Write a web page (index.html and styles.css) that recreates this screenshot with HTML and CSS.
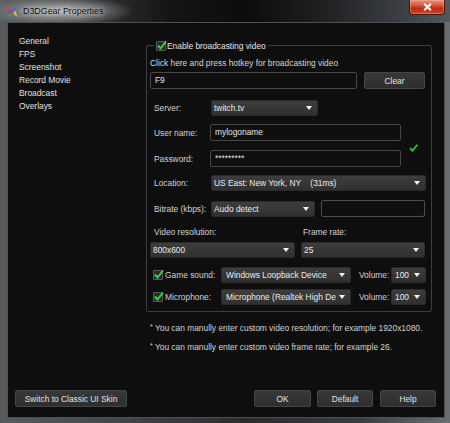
FILE: index.html
```html
<!DOCTYPE html>
<html>
<head>
<meta charset="utf-8">
<title>D3DGear Properties</title>
<link rel="stylesheet" href="styles.css">
</head>
<body>
<div class="window">
  <div class="titlebar">
    <svg class="app-icon" width="12" height="12" viewBox="0 0 12 12">
      <polygon points="0.5,1 6,5 3,7.5" fill="#e8342a"/>
      <polygon points="11.5,0.5 7,6.5 5,3.5" fill="#2f6ff0"/>
      <polygon points="1,11.5 4.5,6 7,9" fill="#22b04a"/>
      <polygon points="11.5,11 6,7 9,4.5" fill="#f0c020"/>
      <polygon points="4,4.5 7.5,4 8,7.5 4.5,8" fill="#9a3ad8"/>
    </svg>
    <span class="title">D3DGear Properties</span>
    <div class="close">
      <svg width="9" height="8" viewBox="0 0 9 8"><path d="M1.2 0.8 L7.8 7.2 M7.8 0.8 L1.2 7.2" stroke="#fff" stroke-width="2.1"/></svg>
    </div>
  </div>

  <div class="client">
    <div class="main">
      <ul class="nav">
        <li>General</li>
        <li>FPS</li>
        <li>Screenshot</li>
        <li>Record Movie</li>
        <li>Broadcast</li>
        <li>Overlays</li>
      </ul>

      <div class="panel">
        <fieldset class="group">
          <legend class="legend">
            <span class="checkbox"><svg width="11" height="11" viewBox="0 0 11 11"><path d="M2 5.5 L4.5 8.5 L10 1.5" fill="none" stroke="#39d13a" stroke-width="2"/></svg></span>
            <span>Enable broadcasting video</span>
          </legend>

          <div class="hint">Click here and press hotkey for broadcasting video</div>

          <div class="row hotkey-row">
            <div class="input hotkey">F9</div>
            <div class="btn clear">Clear</div>
          </div>

          <div class="row server-row">
            <span class="label">Server:</span>
            <div class="select server"><span class="val">twitch.tv</span><span class="arrow"></span></div>
          </div>

          <div class="creds">
            <span class="label">User name:</span>
            <div class="input">mylogoname</div>
            <svg class="ok-mark" width="9" height="8" viewBox="0 0 9 8"><path d="M1 4.2 L3.4 6.8 L8.3 0.8" fill="none" stroke="#2ec82e" stroke-width="1.8"/></svg>
            <span class="label">Password:</span>
            <div class="input pw">*********</div>
          </div>

          <div class="row location-row">
            <span class="label">Location:</span>
            <div class="select location"><span class="val">US East: New York, NY&nbsp;&nbsp;&nbsp;&nbsp;(31ms)</span><span class="arrow"></span></div>
          </div>

          <div class="row bitrate-row">
            <span class="label">Bitrate (kbps):</span>
            <div class="select bitrate"><span class="val">Audo detect</span><span class="arrow"></span></div>
            <div class="input bitrate-input"></div>
          </div>

          <div class="video-grid">
            <span class="caption res-cap">Video resolution:</span>
            <span class="caption fr-cap">Frame rate:</span>
            <div class="select"><span class="val">800x600</span><span class="arrow"></span></div>
            <div class="select"><span class="val">25</span><span class="arrow"></span></div>
          </div>

          <div class="row audio-row game-row">
            <span class="checkbox small"><svg width="11" height="11" viewBox="0 0 11 11"><path d="M2 5.5 L4.5 8.5 L10 1.5" fill="none" stroke="#39d13a" stroke-width="2"/></svg></span>
            <span class="audio-label">Game sound:</span>
            <div class="select device"><span class="val">Windows Loopback Device</span><span class="arrow"></span></div>
            <span class="vol-label">Volume:</span>
            <div class="select volume"><span class="val">100</span><span class="arrow"></span></div>
          </div>

          <div class="row audio-row mic-row">
            <span class="checkbox small"><svg width="11" height="11" viewBox="0 0 11 11"><path d="M2 5.5 L4.5 8.5 L10 1.5" fill="none" stroke="#39d13a" stroke-width="2"/></svg></span>
            <span class="audio-label">Microphone:</span>
            <div class="select device"><span class="val">Microphone (Realtek High Defir</span><span class="arrow"></span></div>
            <span class="vol-label">Volume:</span>
            <div class="select volume"><span class="val">100</span><span class="arrow"></span></div>
          </div>
        </fieldset>

        <div class="notes">
          <p><span class="star">*</span> You can manully enter custom video resolution; for example 1920x1080.</p>
          <p><span class="star">*</span> You can manully enter custom video frame rate; for example 26.</p>
        </div>
      </div>
    </div>

    <div class="footer">
      <div class="btn skin">Switch to Classic UI Skin</div>
      <div class="spacer"></div>
      <div class="btn ok">OK</div>
      <div class="btn default">Default</div>
      <div class="btn help">Help</div>
    </div>
  </div>
</div>
</body>
</html>
```

FILE: styles.css
```css
html, body {
  margin: 0;
  padding: 0;
  background: #1a1c1e;
}

.window {
  width: 450px;
  height: 423px;
  box-sizing: border-box;
  display: flex;
  flex-direction: column;
  background: linear-gradient(90deg, #575b5f 0%, #44474a 25%, #2a2c2e 55%, #3a3d40 80%, #6a6e72 100%);
  font-family: "Liberation Sans", Arial, sans-serif;
  font-size: 8.4px;
  color: #d8d8d8;
  overflow: hidden;
}

/* ---------- title bar ---------- */
.titlebar {
  height: 22px;
  flex: none;
  display: flex;
  align-items: center;
  background:
    radial-gradient(ellipse 72px 15px at 62px 11px, rgba(200,200,200,0.85), rgba(160,160,160,0.35) 70%, rgba(0,0,0,0) 100%),
    linear-gradient(90deg, #5e6266 0%, #4c4f52 8%, #2e3032 22%, #121416 38%, #0b0c0e 55%, #1e2022 72%, #3a3d40 88%, #55585b 100%);
}

.app-icon {
  margin-left: 6px;
  margin-top: 1px;
  flex: none;
}

.title {
  margin-left: 5px;
  font-size: 8.9px;
  color: #111;
  text-shadow: 0 0 4px rgba(255,255,255,0.8), 0 0 8px rgba(255,255,255,0.5);
  flex: 1;
}

.close {
  align-self: flex-start;
  width: 36px;
  height: 15px;
  margin-right: 5px;
  box-sizing: border-box;
  border: 1px solid #4a140c;
  border-top: none;
  border-radius: 0 0 4px 4px;
  background: linear-gradient(#e8907a 0%, #d4563c 40%, #bb2c14 60%, #cc4426 100%);
  display: flex;
  align-items: center;
  justify-content: center;
  box-shadow: inset 0 0 0 1px rgba(255,200,180,0.35);
}

/* ---------- client ---------- */
.client {
  flex: 1;
  margin: 0 5px 5px 7px;
  border: 1px solid #505050;
  background: #0e0e0e;
  display: flex;
  flex-direction: column;
  min-height: 0;
}

.main {
  flex: 1;
  display: flex;
  min-height: 0;
}

.nav {
  list-style: none;
  margin: 0;
  width: 138px;
  box-sizing: border-box;
  padding: 12px 0 0 11px;
  line-height: 13px;
  color: #e2e2e2;
  flex: none;
}

.panel {
  padding-top: 17px;
  width: 286px;
}

/* ---------- group box ---------- */
.group {
  margin: 0;
  width: 286px;
  box-sizing: border-box;
  border: 1px solid #3e3e3e;
  border-radius: 2px;
  padding: 0 5px 6px 3px;
  min-width: 0;
}

.legend {
  margin-left: 4px;
  padding: 0 2px;
  height: 11px;
  display: flex;
  align-items: center;
  gap: 1px;
  color: #e4e4e4;
}

.checkbox {
  width: 10px;
  height: 10px;
  box-sizing: border-box;
  border: 1px solid #5a5a5a;
  background: #2a2a2a;
  border-radius: 1px;
  position: relative;
  flex: none;
}

.checkbox svg {
  position: absolute;
  left: -1px;
  top: -2px;
}

.hint {
  margin-top: 6px;
  line-height: 12px;
  color: #d6d6d6;
}

.row {
  display: flex;
  align-items: center;
}

.label {
  width: 61px;
  box-sizing: border-box;
  padding-left: 4px;
  flex: none;
  color: #d4d4d4;
}

.input {
  height: 17px;
  box-sizing: border-box;
  border: 1px solid #474747;
  border-radius: 2px;
  background: #0f0f0f;
  padding: 0 4px;
  line-height: 15px;
  color: #e6e6e6;
}

.btn {
  height: 17px;
  box-sizing: border-box;
  border: 1px solid #454545;
  border-radius: 2px;
  background: linear-gradient(#383838, #2e2e2e);
  color: #e2e2e2;
  display: flex;
  align-items: center;
  justify-content: center;
}

.select {
  height: 16px;
  box-sizing: border-box;
  border-radius: 2px;
  background: linear-gradient(#3d3d3d, #303030);
  border: 1px solid #2a2a2a;
  display: flex;
  align-items: center;
  padding: 0 5px 0 2px;
  color: #ececec;
}

.select .val {
  flex: 1;
  min-width: 0;
  white-space: nowrap;
  overflow: hidden;
}

.select .arrow {
  flex: none;
  width: 0;
  height: 0;
  border-left: 3.5px solid transparent;
  border-right: 3.5px solid transparent;
  border-top: 4px solid #f4f4f4;
  margin-left: 3px;
}

/* rows */
.hotkey-row {
  margin-top: 3px;
}

.hotkey {
  width: 207px;
}

.clear {
  width: 61px;
  margin-left: 7px;
}

.server-row {
  margin-top: 11px;
}

.server {
  width: 107px;
}

.creds {
  margin-top: 8px;
  display: grid;
  grid-template-columns: 60px 191px auto;
  row-gap: 9px;
  align-items: center;
}

.creds .label {
  width: auto;
}

.ok-mark {
  grid-column: 3;
  grid-row: 1 / span 2;
  margin-left: 8px;
  margin-top: 4px;
}

.location-row {
  margin-top: 8px;
}

.location {
  flex: 1;
}

.bitrate-row {
  margin-top: 9px;
  height: 17px;
}

.bitrate {
  width: 104px;
}

.bitrate-input {
  flex: 1;
  margin-left: 6px;
  margin-right: 1px;
  border-color: #4c4c4c;
}

.video-grid {
  margin-top: 9px;
  display: grid;
  grid-template-columns: 145px 124px;
  column-gap: 6px;
  row-gap: 4px;
}

.caption {
  line-height: 12px;
  color: #d4d4d4;
}

.res-cap {
  padding-left: 4px;
}

.fr-cap {
  padding-left: 2px;
}

.game-row {
  margin-top: 9px;
}

.mic-row {
  margin-top: 6px;
}

.audio-row .checkbox {
  margin-left: 3px;
}

.audio-label {
  width: 56px;
  padding-left: 2px;
  flex: none;
  color: #d4d4d4;
}

.device {
  width: 130px;
  padding-left: 4px;
}

.vol-label {
  width: 31px;
  margin-left: 8px;
  flex: none;
  white-space: nowrap;
  color: #d4d4d4;
}

.volume {
  flex: 1;
  margin-left: 1px;
  padding-left: 3px;
}

/* notes */
.notes {
  margin-top: 6px;
  padding-left: 4px;
  color: #d4d4d4;
}

.notes p {
  margin: 0;
  line-height: 17px;
}

.star {
  font-size: 7px;
  vertical-align: 2px;
}

/* footer */
.footer {
  flex: none;
  display: flex;
  align-items: center;
  padding: 0 8px 10px 7px;
}

.footer .btn {
  height: 17px;
}

.skin {
  width: 112px;
}

.spacer {
  flex: 1;
}

.ok {
  width: 57px;
}

.default {
  width: 56px;
  margin-left: 6px;
}

.help {
  width: 56px;
  margin-left: 7px;
}
```
